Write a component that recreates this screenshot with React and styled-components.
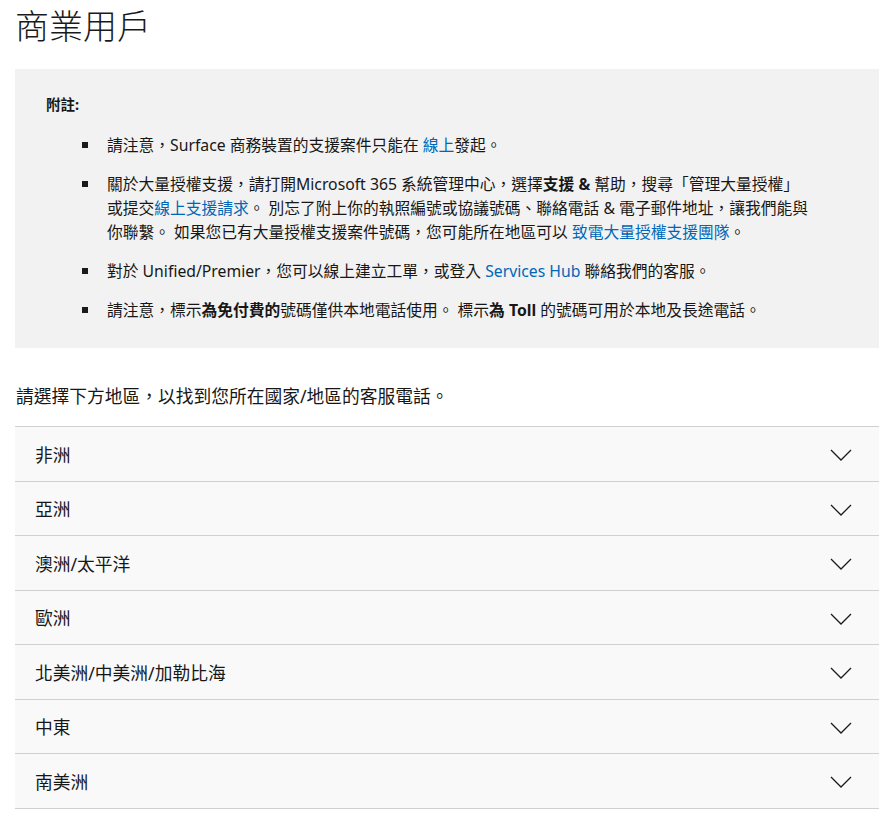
import React from "react";
import styled, { createGlobalStyle } from "styled-components";

const GlobalStyle = createGlobalStyle`
  body {
    margin: 0;
    background: #fff;
    color: #171717;
    font-family: "Segoe UI", "Noto Sans", "Noto Sans CJK TC", sans-serif;
  }
`;

const Page = styled.div`
  padding: 0 12px 0 15px;
`;

const Title = styled.h1`
  margin: 0;
  padding: 4px 0 0 0;
  font-size: 34px;
  font-weight: 300;
  line-height: 44px;
  color: #1a1a1a;
`;

const Note = styled.div`
  margin-top: 21px;
  background-color: #f2f2f2;
  padding: 23px 31px 26px 31px;
  font-size: 15.75px;
  line-height: 24px;
`;

const NoteLabel = styled.p`
  margin: 0 0 17px;
  font-weight: 700;
  font-size: 14.5px;
`;

const List = styled.ul`
  list-style: none;
  margin: 0;
  padding: 0;
  display: flex;
  flex-direction: column;
  gap: 15px;
`;

const Item = styled.li`
  position: relative;
  padding-left: 61px;

  &::before {
    content: "";
    position: absolute;
    left: 36px;
    top: 9px;
    width: 6px;
    height: 6px;
    background: #1a1a1a;
  }
`;

const Link = styled.a`
  color: #0067b8;
  text-decoration: none;
`;

const Intro = styled.p`
  margin: 30px 0 0 1px;
  font-size: 17.75px;
  line-height: 36px;
`;

const Accordion = styled.div`
  margin-top: 12px;
  border-bottom: 1px solid #d0d0d0;
`;

const Row = styled.div`
  display: flex;
  align-items: center;
  justify-content: space-between;
  height: 53.5px;
  padding: 0 27px 0 20px;
  background: #f9f9f9;
  border-top: 1px solid #d0d0d0;
  font-size: 17.75px;

  svg {
    margin-top: 3px;
  }
`;

const Chevron = () => (
  <svg width="22" height="12" viewBox="0 0 22 12" fill="none">
    <path d="M1 1 L11 11 L21 1" stroke="#1a1a1a" strokeWidth="1.3" />
  </svg>
);

const regions = [
  "非洲",
  "亞洲",
  "澳洲/太平洋",
  "歐洲",
  "北美洲/中美洲/加勒比海",
  "中東",
  "南美洲",
];

export default function App() {
  return (
    <Page>
      <GlobalStyle />
      <Title>商業用戶</Title>
      <Note>
        <NoteLabel>附註:</NoteLabel>
        <List>
          <Item>
            請注意，Surface 商務裝置的支援案件只能在 <Link>線上</Link>發起。
          </Item>
          <Item>
            關於大量授權支援，請打開Microsoft 365 系統管理中心，選擇<b>支援 &amp;</b> 幫助，搜尋「管理大量授權」
            <br />
            或提交<Link>線上支援請求</Link>。 別忘了附上你的執照編號或協議號碼、聯絡電話 &amp; 電子郵件地址，讓我們能與
            <br />
            你聯繫。 如果您已有大量授權支援案件號碼，您可能所在地區可以 <Link>致電大量授權支援團隊</Link>。
          </Item>
          <Item>
            對於 Unified/Premier，您可以線上建立工單，或登入 <Link>Services Hub</Link> 聯絡我們的客服。
          </Item>
          <Item>
            請注意，標示<b>為免付費的</b>號碼僅供本地電話使用。 標示<b>為 Toll</b> 的號碼可用於本地及長途電話。
          </Item>
        </List>
      </Note>
      <Intro>請選擇下方地區，以找到您所在國家/地區的客服電話。</Intro>
      <Accordion>
        {regions.map((r) => (
          <Row key={r}>
            <span>{r}</span>
            <Chevron />
          </Row>
        ))}
      </Accordion>
    </Page>
  );
}
